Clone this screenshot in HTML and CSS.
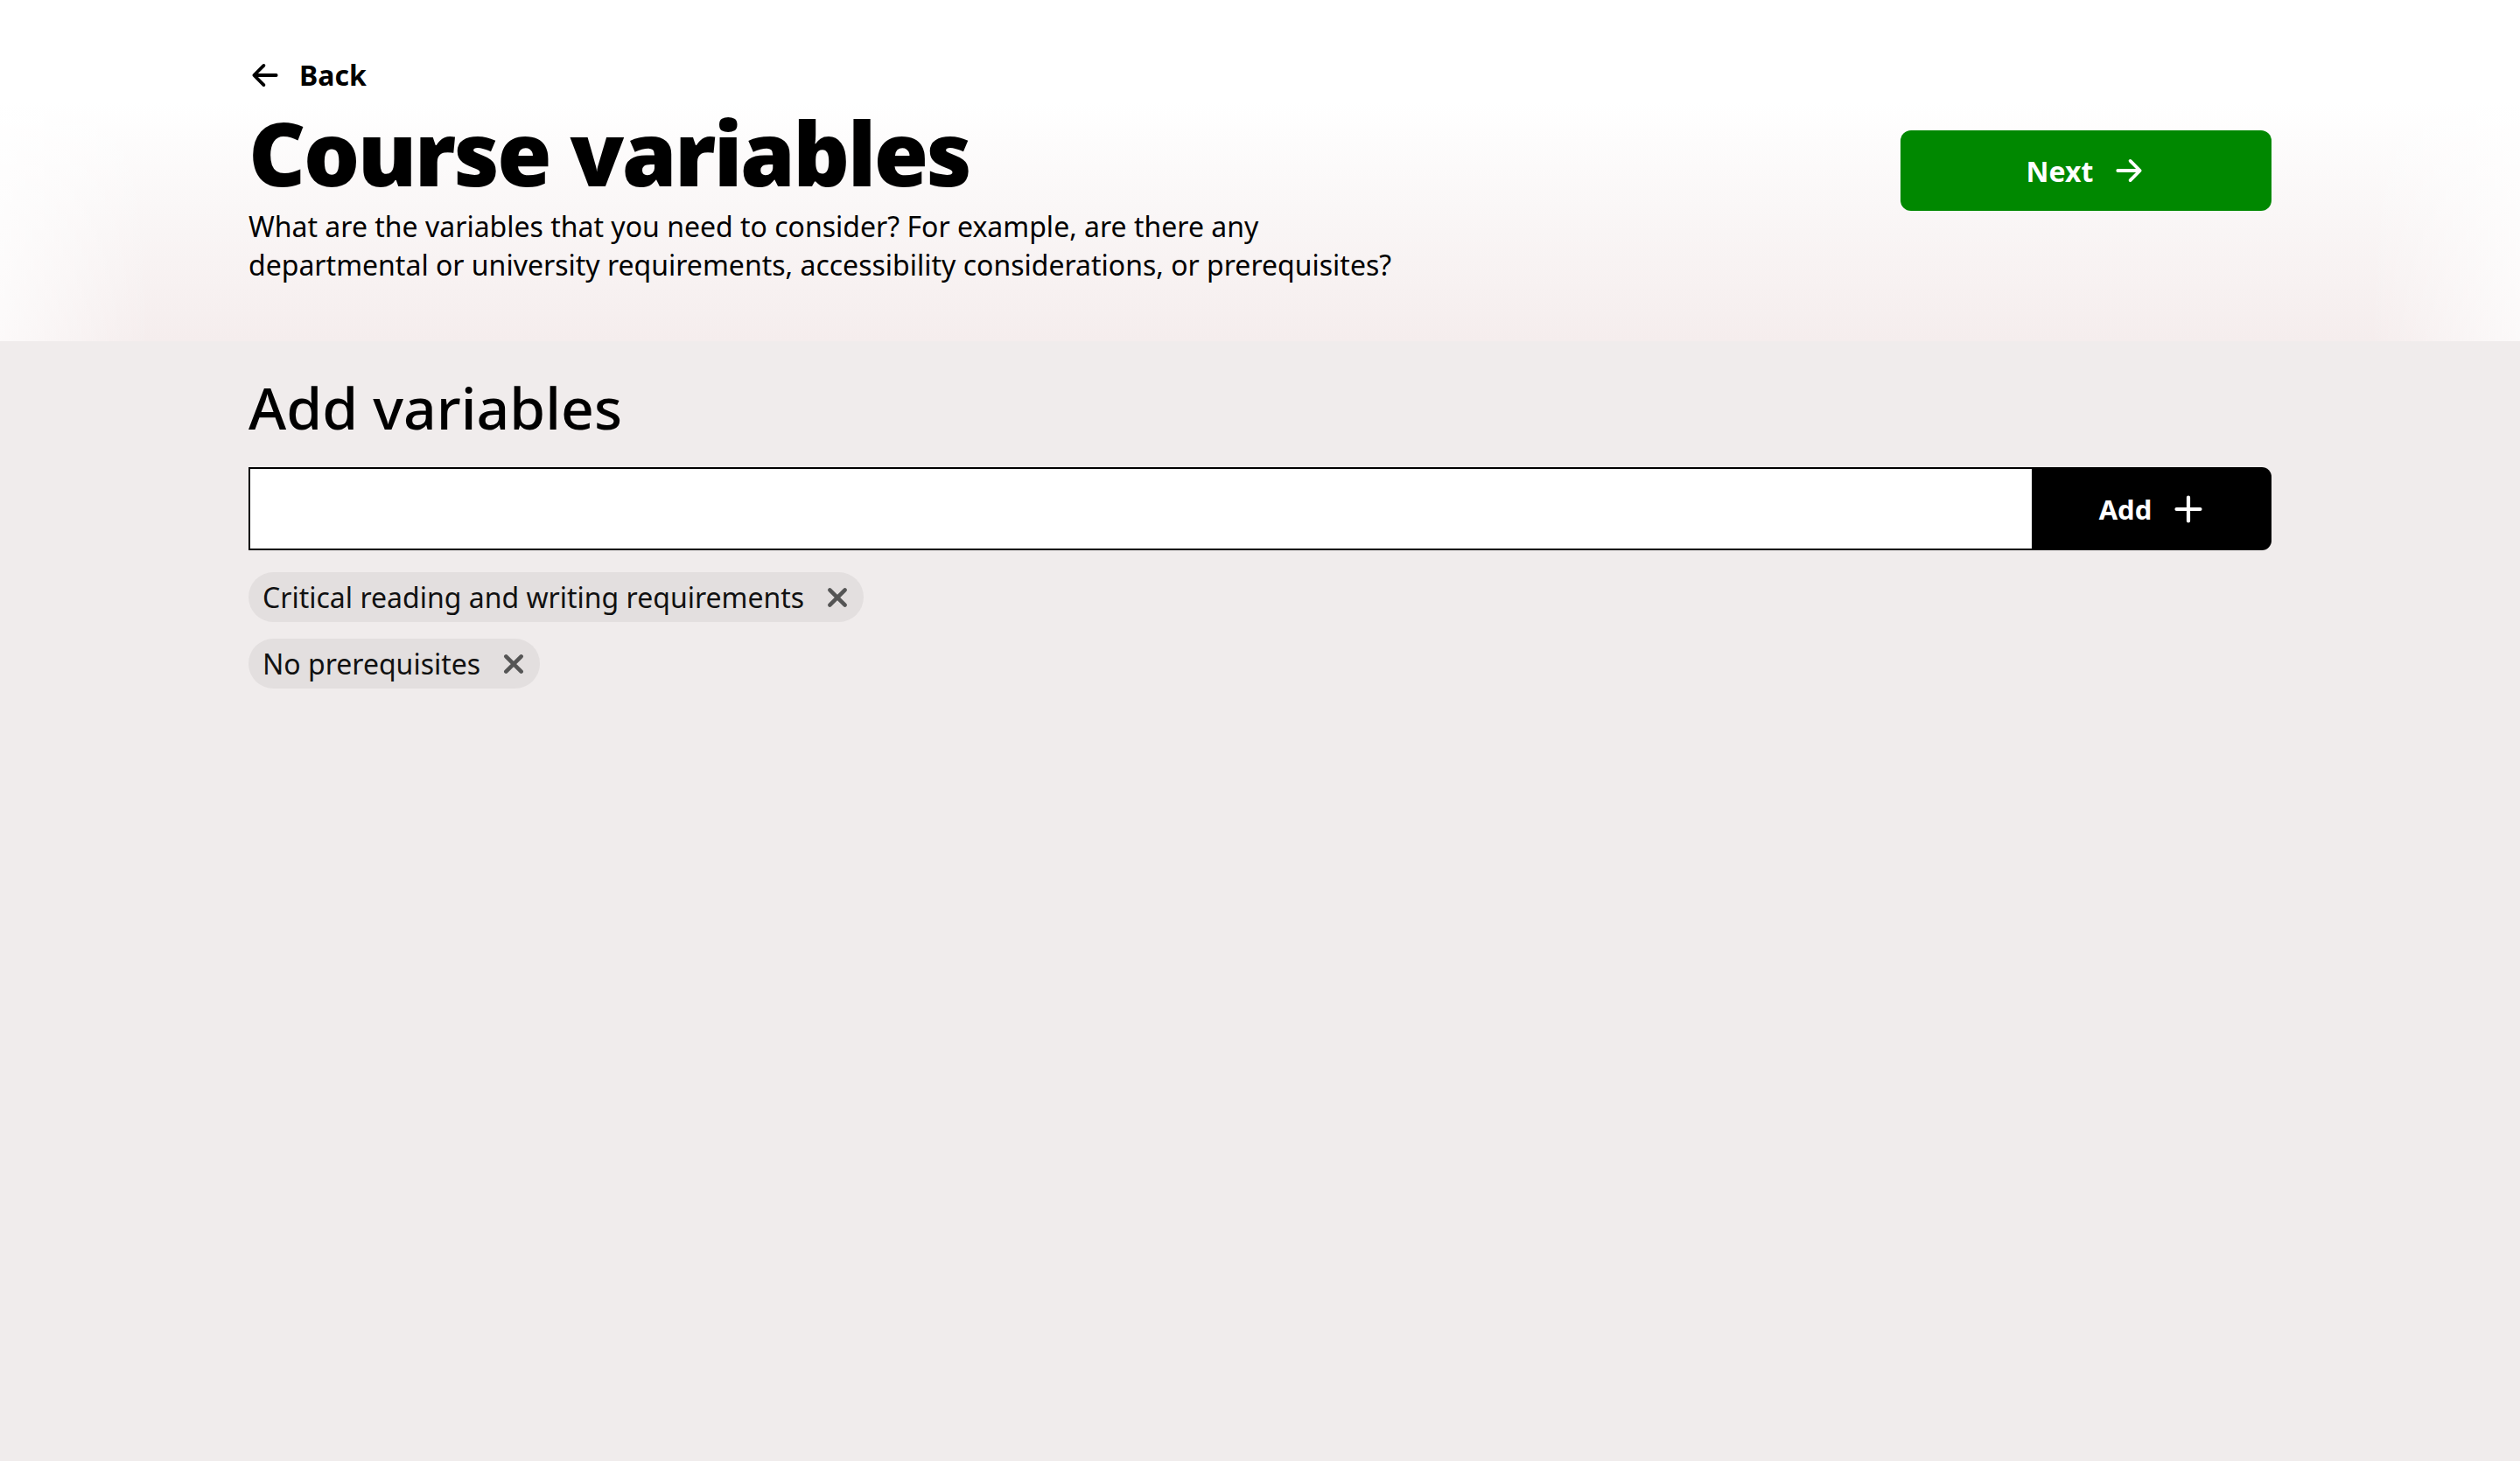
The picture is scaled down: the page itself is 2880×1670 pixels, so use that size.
FILE: index.html
```html
<!DOCTYPE html>
<html lang="en">
<head>
<meta charset="utf-8">
<title>Course variables</title>
<link rel="stylesheet" href="styles.css">
</head>
<body>
<header class="page-header">
  <div class="container header-row">
    <div class="header-text">
      <a class="back-link" href="#">
        <svg class="back-icon" viewBox="0 0 24 24" aria-hidden="true"><path d="M20 12H4.5M11 5l-7 7 7 7"/></svg>
        <span>Back</span>
      </a>
      <h1 class="title">Course variables</h1>
      <p class="description">What are the variables that you need to consider? For example, are there any departmental or university requirements, accessibility considerations, or prerequisites?</p>
    </div>
    <button class="next-btn" type="button">
      <span>Next</span>
      <svg class="next-icon" viewBox="0 0 24 24" aria-hidden="true"><path d="M4 12h15.5M13 5l7 7-7 7"/></svg>
    </button>
  </div>
</header>
<main class="main">
  <div class="container">
    <h2 class="section-title">Add variables</h2>
    <form class="add-row">
      <input class="add-input" type="text" aria-label="Variable">
      <button class="add-btn" type="button">
        <span>Add</span>
        <svg class="plus-icon" viewBox="0 0 24 24" aria-hidden="true"><path d="M12 3v18M3 12h18"/></svg>
      </button>
    </form>
    <ul class="chips">
      <li class="chip"><span>Critical reading and writing requirements</span><svg class="chip-x" viewBox="0 0 24 24" aria-hidden="true"><path d="M4 4l16 16M20 4L4 20"/></svg></li>
      <li class="chip"><span>No prerequisites</span><svg class="chip-x" viewBox="0 0 24 24" aria-hidden="true"><path d="M4 4l16 16M20 4L4 20"/></svg></li>
    </ul>
  </div>
</main>
</body>
</html>
```
FILE: styles.css
```css
* { box-sizing: border-box; }
html, body { margin: 0; padding: 0; }
body {
  font-family: "Noto Sans", "Open Sans", sans-serif;
  color: #000;
  background: #f0ecec;
  min-height: 1670px;
}
.container {
  width: 2312px;
  margin: 0 auto;
}
.page-header {
  height: 390px;
  background:
    linear-gradient(to right, rgba(255,255,255,0.7) 0, rgba(255,255,255,0) 6%, rgba(255,255,255,0) 94%, rgba(255,255,255,0.7) 100%),
    linear-gradient(to bottom, #ffffff 0%, #ffffff 30%, #faf7f7 60%, #f5eded 100%);
  padding-top: 66px;
}
.header-row {
  display: flex;
  justify-content: space-between;
  align-items: flex-start;
}
.back-link {
  display: inline-flex;
  align-items: center;
  gap: 20px;
  color: #000;
  text-decoration: none;
  font-weight: 700;
  font-size: 32px;
  line-height: 40px;
}
.back-icon {
  width: 38px;
  height: 38px;
  fill: none;
  stroke: #000;
  stroke-width: 2.4;
  stroke-linecap: round;
  stroke-linejoin: round;
}
.title {
  margin: 9px 0 0;
  font-size: 101px;
  font-weight: 900;
  line-height: 1.1;
  letter-spacing: -2.6px;
}
.description {
  margin: 7px 0 0;
  font-size: 32px;
  line-height: 44px;
  width: 1320px;
}
.next-btn {
  margin-top: 83px;
  width: 424px;
  height: 92px;
  border: none;
  border-radius: 12px;
  background: #008800;
  color: #fff;
  font-family: inherit;
  font-size: 32px;
  font-weight: 700;
  display: flex;
  align-items: center;
  justify-content: center;
  gap: 22px;
}
.next-icon {
  width: 38px;
  height: 38px;
  fill: none;
  stroke: #fff;
  stroke-width: 2.4;
  stroke-linecap: round;
  stroke-linejoin: round;
}
.main {
  padding-top: 36px;
}
.section-title {
  margin: 0;
  font-size: 66px;
  font-weight: 500;
  line-height: 1.2;
}
.add-row {
  margin: 29px 0 0;
  display: flex;
  height: 95px;
}
.add-input {
  flex: 1;
  border: 2px solid #000;
  border-right: none;
  background: #fff;
  font-family: inherit;
  font-size: 30px;
  padding: 0 20px;
  outline: none;
}
.add-btn {
  width: 274px;
  border: none;
  border-radius: 0 11px 11px 0;
  background: #000;
  color: #fff;
  font-family: inherit;
  font-size: 31px;
  font-weight: 700;
  display: flex;
  align-items: center;
  justify-content: center;
  gap: 24px;
}
.plus-icon {
  width: 36px;
  height: 36px;
  fill: none;
  stroke: #fff;
  stroke-width: 2.8;
  stroke-linecap: round;
}
.chips {
  list-style: none;
  margin: 25px 0 0;
  padding: 0;
  display: flex;
  flex-direction: column;
  align-items: flex-start;
  gap: 19px;
}
.chip {
  display: inline-flex;
  align-items: center;
  gap: 25px;
  height: 57px;
  padding: 0 17px 0 16px;
  border-radius: 29px;
  background: #e3dfdf;
  font-size: 32px;
  color: #111;
}
.chip-x {
  width: 26px;
  height: 26px;
  fill: none;
  stroke: #555;
  stroke-width: 4.2;
  stroke-linecap: round;
}
```
